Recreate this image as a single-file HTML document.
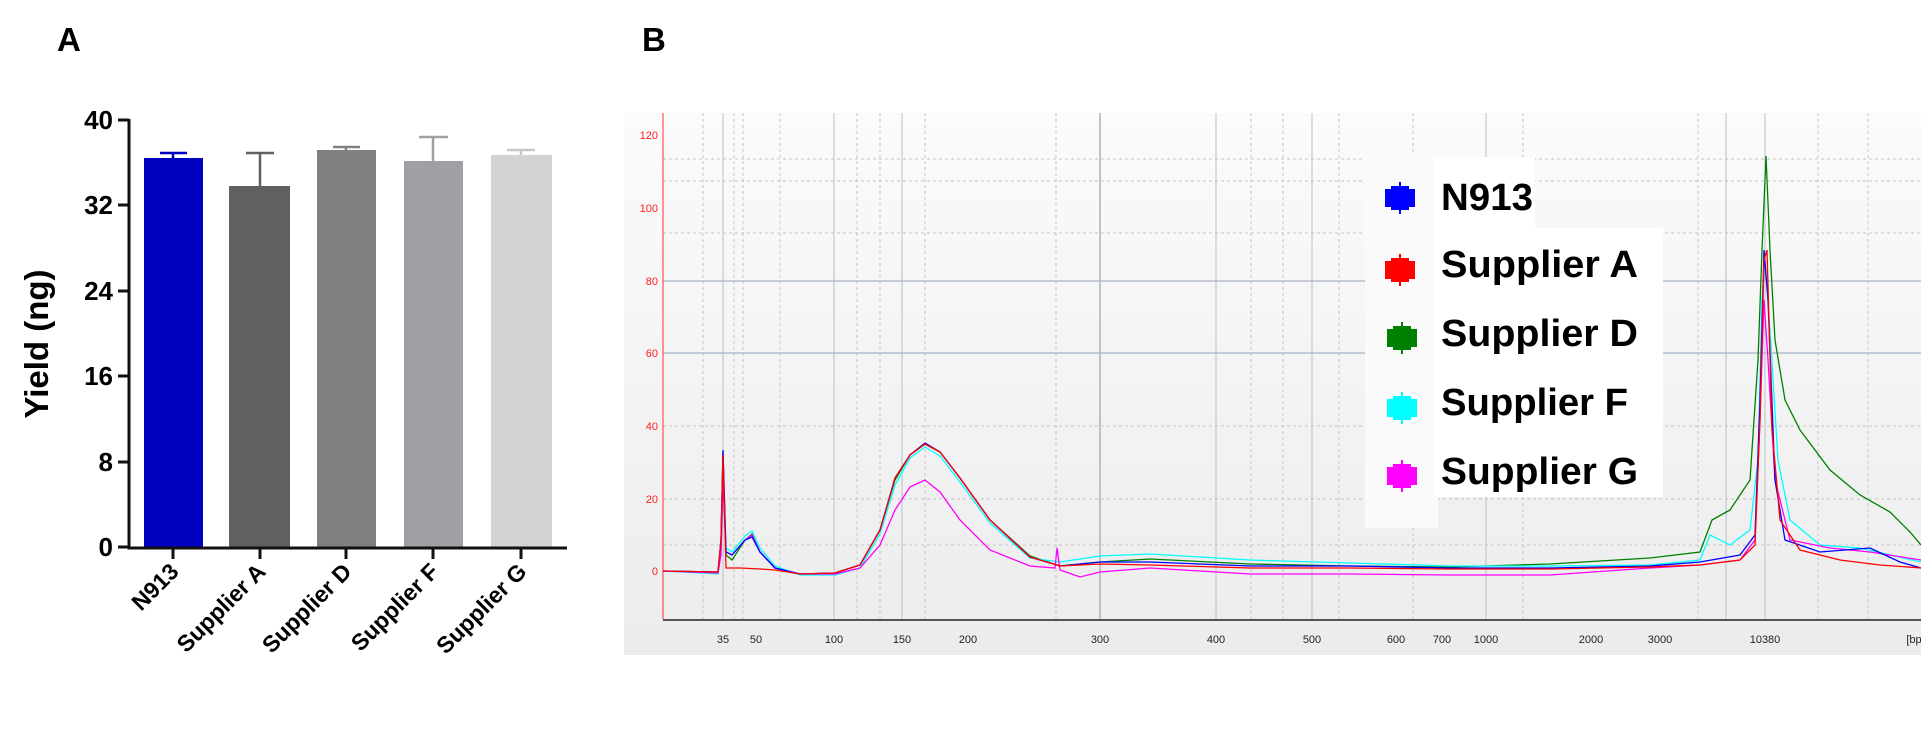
<!DOCTYPE html>
<html><head><meta charset="utf-8"><style>
html,body{margin:0;padding:0;background:#fff;width:1921px;height:753px;overflow:hidden}
svg{display:block}
text{font-family:"Liberation Sans",Arial,sans-serif}
</style></head><body>
<svg width="1921" height="753" viewBox="0 0 1921 753" xmlns="http://www.w3.org/2000/svg">
<defs>
<linearGradient id="bg" x1="0" y1="0" x2="0" y2="1"><stop offset="0" stop-color="#fbfbfb"/><stop offset="1" stop-color="#ececec"/></linearGradient>
</defs>
<!-- Panel A -->
<text x="57" y="51" font-size="33" font-weight="bold">A</text>
<text x="642" y="51" font-size="33" font-weight="bold">B</text>
<!-- bars -->
<rect x="144" y="158" width="59" height="389" fill="#0000bf"/>
<rect x="229" y="186" width="61" height="361" fill="#606060"/>
<rect x="317" y="150" width="59" height="397" fill="#808080"/>
<rect x="404" y="161" width="59" height="386" fill="#a0a0a4"/>
<rect x="491" y="155" width="61" height="392" fill="#d3d3d3"/>
<g stroke-width="2.5">
<path d="M173 158V153M160 153H187" stroke="#0000bf"/>
<path d="M260 186V153M246 153H274" stroke="#606060"/>
<path d="M346 150V147M333 147H360" stroke="#808080"/>
<path d="M433 161V137M419 137H448" stroke="#a0a0a4"/>
<path d="M521 155V150M507 150H535" stroke="#c8c8c8"/>
</g>
<g stroke="#111" stroke-width="3" fill="none">
<path d="M129 119V548H567"/>
<path d="M118 120H129M118 205H129M118 291H129M118 376H129M118 462H129M118 547H129"/>
<path d="M173 548V559M260 548V559M346 548V559M433 548V559M521 548V559"/>
</g>
<g font-size="26" font-weight="bold" text-anchor="end">
<text x="113" y="129">40</text><text x="113" y="214">32</text><text x="113" y="300">24</text>
<text x="113" y="385">16</text><text x="113" y="471">8</text><text x="113" y="556">0</text>
</g>
<text transform="translate(48,344) rotate(-90)" font-size="33" font-weight="bold" text-anchor="middle">Yield (ng)</text>
<g font-size="23" font-weight="bold" text-anchor="end">
<text transform="translate(180,573) rotate(-45)">N913</text>
<text transform="translate(267,573) rotate(-45)">Supplier A</text>
<text transform="translate(353,573) rotate(-45)">Supplier D</text>
<text transform="translate(440,573) rotate(-45)">Supplier F</text>
<text transform="translate(528,573) rotate(-45)">Supplier G</text>
</g>
<!-- Panel B -->
<rect x="624" y="113" width="1297" height="542" fill="url(#bg)"/>
<g stroke="#c4c4c4" stroke-width="1" stroke-dasharray="3,3">
<path d="M663 159H1921M663 181H1921M663 233H1921M663 426H1921M663 499H1921M663 545H1921"/>
<path d="M703 113V619M734 113V619M743 113V619M780 113V619M857 113V619M880 113V619M925 113V619M1056 113V619M1251 113V619M1283 113V619M1339 113V619M1413 113V619M1523 113V619M1698 113V619M1818 113V619M1868 113V619"/>
</g>
<g stroke="#b6bfd0" stroke-width="1">
<path d="M723 113V619M834 113V619M902 113V619M1216 113V619M1312 113V619M1486 113V619M1726 113V619M1765 113V619"/>
</g>
<g stroke="#a8b2c6" stroke-width="1.5"><path d="M1100 113V619"/><path d="M663 281H1921M663 353H1921" stroke-width="1.2"/></g>
<path d="M663 113V619" stroke="#ff3030" stroke-width="1"/>
<path d="M663 620H1921" stroke="#222" stroke-width="1.5"/>
<g font-size="11" fill="#ff2020" text-anchor="end" font-family="Liberation Sans Narrow,Liberation Sans,sans-serif">
<text x="658" y="139">120</text><text x="658" y="212">100</text><text x="658" y="285">80</text><text x="658" y="357">60</text><text x="658" y="430">40</text><text x="658" y="503">20</text><text x="658" y="575">0</text>
</g>
<g font-size="11" fill="#222" text-anchor="middle">
<text x="723" y="643">35</text><text x="756" y="643">50</text><text x="834" y="643">100</text><text x="902" y="643">150</text><text x="968" y="643">200</text><text x="1100" y="643">300</text><text x="1216" y="643">400</text><text x="1312" y="643">500</text><text x="1396" y="643">600</text><text x="1442" y="643">700</text><text x="1486" y="643">1000</text><text x="1591" y="643">2000</text><text x="1660" y="643">3000</text><text x="1765" y="643">10380</text><text x="1914" y="643">[bp</text>
</g>
<g fill="none" stroke-width="1.3">
<polyline stroke="#008000" points="663,571 718,572 721,540 723,452 726,555 732,560 745,540 752,534 760,552 775,568 800,574 835,573 860,565 880,530 895,480 910,455 925,444 940,452 960,478 990,520 1030,556 1060,566 1100,562 1150,559 1250,564 1350,566 1450,567 1550,564 1650,558 1700,552 1712,520 1730,510 1750,480 1758,360 1762,250 1766,156 1770,250 1775,340 1785,400 1800,430 1830,470 1860,495 1890,512 1910,532 1921,545"/>
<polyline stroke="#00ffff" points="663,571 718,574 721,550 723,460 726,548 732,552 745,536 752,531 760,548 775,566 800,575 835,575 860,568 880,534 895,485 910,458 925,447 940,456 960,482 990,523 1030,558 1060,562 1100,556 1150,554 1250,560 1350,563 1450,566 1550,566 1650,565 1700,560 1710,535 1730,545 1750,530 1758,460 1762,300 1765,260 1770,330 1778,460 1790,520 1820,545 1860,548 1921,562"/>
<polyline stroke="#ff00ff" points="663,571 718,573 721,555 723,480 726,552 732,555 745,540 752,535 760,552 775,568 800,574 835,574 860,568 880,545 895,510 910,487 925,480 940,492 960,520 990,550 1030,566 1055,568 1057,548 1060,570 1080,577 1100,572 1150,568 1250,574 1350,574 1450,575 1550,575 1650,568 1700,565 1740,560 1755,540 1760,420 1764,300 1768,360 1775,480 1790,540 1830,548 1870,552 1921,560"/>
<polyline stroke="#0000ff" points="663,571 718,572 721,540 723,450 726,552 732,555 745,540 752,537 760,552 775,568 800,574 835,573 860,565 880,530 895,478 910,455 925,443 940,452 960,478 990,520 1030,557 1060,566 1100,562 1150,562 1250,566 1350,566 1450,568 1550,568 1650,566 1700,562 1740,555 1755,535 1760,400 1764,250 1768,300 1775,480 1785,540 1820,552 1870,548 1900,562 1921,568"/>
<polyline stroke="#ff0000" points="663,571 718,572 721,540 723,455 726,568 740,568 760,569 775,570 800,574 835,573 860,565 880,530 895,478 910,455 925,444 940,452 960,478 990,520 1030,557 1060,566 1100,564 1150,565 1250,568 1350,568 1450,569 1550,569 1650,567 1700,565 1740,560 1755,545 1760,420 1764,260 1767,250 1772,430 1780,520 1800,550 1840,560 1880,565 1921,568"/>
</g>
<!-- legend -->
<rect x="1365" y="155" width="73" height="373" fill="#fafafa"/>
<rect x="1433" y="157" width="102" height="73" fill="#fff"/>
<rect x="1433" y="228" width="230" height="269" fill="#fff"/>
<g>
<path d="M1400 182V214M1386 190H1414V206H1386Z" fill="#0000ff" stroke="#0000ff" stroke-width="2"/>
<path d="M1400 254V286M1386 262H1414V278H1386Z" fill="#ff0000" stroke="#ff0000" stroke-width="2"/>
<path d="M1402 322V354M1388 330H1416V346H1388Z" fill="#008000" stroke="#008000" stroke-width="2"/>
<path d="M1402 392V424M1388 400H1416V416H1388Z" fill="#00ffff" stroke="#00ffff" stroke-width="2"/>
<path d="M1402 460V492M1388 468H1416V484H1388Z" fill="#ff00ff" stroke="#ff00ff" stroke-width="2"/>
<rect x="1391" y="186" width="18" height="24" fill="#0000ff"/>
<rect x="1391" y="258" width="18" height="24" fill="#ff0000"/>
<rect x="1393" y="326" width="18" height="24" fill="#008000"/>
<rect x="1393" y="396" width="18" height="24" fill="#00ffff"/>
<rect x="1393" y="464" width="18" height="24" fill="#ff00ff"/>
</g>
<g font-size="38" font-weight="bold" font-family="DejaVu Sans,Liberation Sans,sans-serif">
<text x="1441" y="210" textLength="92" lengthAdjust="spacingAndGlyphs">N913</text>
<text x="1441" y="277" textLength="197" lengthAdjust="spacingAndGlyphs">Supplier A</text>
<text x="1441" y="346" textLength="197" lengthAdjust="spacingAndGlyphs">Supplier D</text>
<text x="1441" y="415" textLength="187" lengthAdjust="spacingAndGlyphs">Supplier F</text>
<text x="1441" y="484" textLength="197" lengthAdjust="spacingAndGlyphs">Supplier G</text>
</g>
</svg>
</body></html>
